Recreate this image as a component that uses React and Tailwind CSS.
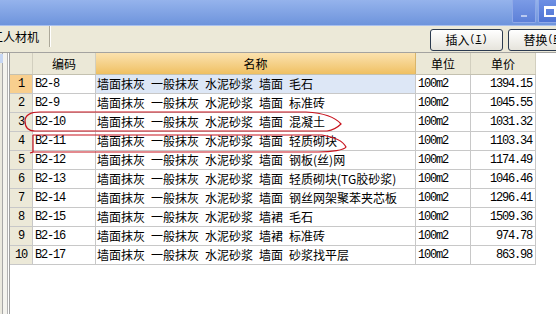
import React from "react";

const rows = [
  ["B2-8", ["墙面抹灰", "一般抹灰", "水泥砂浆", "墙面", "毛石"], "1394.15"],
  ["B2-9", ["墙面抹灰", "一般抹灰", "水泥砂浆", "墙面", "标准砖"], "1045.55"],
  ["B2-10", ["墙面抹灰", "一般抹灰", "水泥砂浆", "墙面", "混凝土"], "1031.32"],
  ["B2-11", ["墙面抹灰", "一般抹灰", "水泥砂浆", "墙面", "轻质砌块"], "1103.34"],
  ["B2-12", ["墙面抹灰", "一般抹灰", "水泥砂浆", "墙面", "钢板(丝)网"], "1174.49"],
  ["B2-13", ["墙面抹灰", "一般抹灰", "水泥砂浆", "墙面", "轻质砌块(TG胶砂浆)"], "1046.46"],
  ["B2-14", ["墙面抹灰", "一般抹灰", "水泥砂浆", "墙面", "钢丝网架聚苯夹芯板"], "1296.41"],
  ["B2-15", ["墙面抹灰", "一般抹灰", "水泥砂浆", "墙裙", "毛石"], "1509.36"],
  ["B2-16", ["墙面抹灰", "一般抹灰", "水泥砂浆", "墙裙", "标准砖"], "974.78"],
  ["B2-17", ["墙面抹灰", "一般抹灰", "水泥砂浆", "墙面", "砂浆找平层"], "863.98"],
];

const cjk = { fontFamily: '"Noto Sans CJK SC", "Liberation Sans", sans-serif' };
const mono = { fontFamily: '"Liberation Mono", "Noto Sans CJK SC", monospace' };

export default function App() {
  return (
    <div className="relative w-[556px] h-[315px] overflow-hidden bg-white text-black" style={cjk}>
      {/* Title bar */}
      <div className="h-[26px] flex justify-end items-start bg-gradient-to-b from-[#95b3ec] to-[#6e94dc] border-b border-[#a9c0ee]">
        <div className="flex gap-[2px] mr-[-6px]">
          <div className="w-[24px] h-[23px] rounded-b-[2px] bg-gradient-to-b from-[#7b9be6] to-[#5d80d8] border border-[#8fa9e8] border-t-0 flex items-end justify-center pb-[5px]">
            <div className="w-[6px] h-[2px] bg-[#b9c9f0]" />
          </div>
          <div className="w-[24px] h-[23px] rounded-b-[2px] bg-gradient-to-b from-[#6d8fe4] to-[#4f74d4] border border-[#8fa9e8] border-t-0 flex items-center justify-center">
            <div className="w-[12px] h-[11px] border-2 border-t-[3px] border-white" />
          </div>
        </div>
      </div>

      {/* Toolbar */}
      <div className="h-[27px] flex items-center bg-[#ece9d8] border-b border-[#a4a3a0] overflow-hidden">
        <div className="ml-[-9px] text-[12px] leading-[14px] mb-[4px]" style={cjk}>工人材机</div>
        <div className="ml-[10px] self-start h-[21px] w-[2px] border-l border-[#aca899] border-r border-r-white" />
        <div className="flex-1" />
        <div className="flex gap-[5px] mr-[-25px] mt-[1px]">
          <div className="w-[73px] h-[22px] rounded-[3px] border border-[#2b3a4f] bg-gradient-to-b from-white to-[#e6e4dc] flex items-center justify-center text-[12px] leading-[14px]">
            插入<span className="text-[10px]" style={mono}>(<span className="underline">I</span>)</span>
          </div>
          <div className="w-[73px] h-[22px] rounded-[3px] border border-[#2b3a4f] bg-gradient-to-b from-white to-[#e6e4dc] flex items-center justify-center text-[12px] leading-[14px]">
            替换<span className="text-[10px]" style={mono}>(<span className="underline">R</span>)</span>
          </div>
        </div>
      </div>

      {/* Body */}
      <div className="flex h-[261px]">
        {/* left strip */}
        <div className="w-[3px] bg-[#ebe9df] border-r border-[#a7a7a7] relative">
          <div className="absolute left-0 top-[1px] w-[3px] h-[9px] bg-[#c6d6f3]" />
        </div>
        <div className="w-[5px] bg-[#f4f3ee] border-r border-[#b3b3b3]" />
        <div className="w-[1px] bg-white" />

        {/* table */}
        <div className="flex flex-col border-l border-[#a0a0a0] h-full">
          <div className="grid grid-cols-[23px_63px_320px_55px_65px] h-[22px] border-b border-[#c4c1b0]">
            <div className="bg-[#ebe8d7] border-r border-[#d2cfbf]" />
            <div className="bg-[#ebe8d7] border-r border-[#d2cfbf] flex items-center justify-center text-[12px]">编码</div>
            <div className="bg-gradient-to-b from-[#fbe2ae] to-[#efc061] border-r border-[#d9b56a] flex items-center justify-center text-[12px]">名称</div>
            <div className="bg-[#ebe8d7] border-r border-[#d2cfbf] flex items-center justify-center text-[12px]">单位</div>
            <div className="bg-[#ebe8d7] border-r border-[#d2cfbf] flex items-center justify-center text-[12px]">单价</div>
          </div>
          {rows.map((r, i) => (
            <div key={i} className="grid grid-cols-[23px_63px_320px_55px_65px] h-[19px] border-b border-[#c8c8c8]">
              <div className={`${i === 0 ? "bg-[#f8cf8e]" : "bg-[#ece9d8]"} border-r border-[#c8c8c8] flex items-center justify-center text-[12px] tracking-[-1.2px]`} style={mono}>{i + 1}</div>
              <div className="border-r border-[#c8c8c8] flex items-center pl-[2px] text-[12px] tracking-[-1.2px]" style={mono}>{r[0]}</div>
              <div className={`${i === 0 ? "bg-[#dde7f6]" : ""} border-r border-[#c8c8c8] flex items-center gap-[6px] pl-[1px] text-[12px] leading-[14px] whitespace-nowrap`}>
                {r[1].map((w, j) => <span key={j}>{w}</span>)}
              </div>
              <div className="border-r border-[#c8c8c8] flex items-center pl-[2px] text-[12px] tracking-[-1.2px]" style={mono}>100m2</div>
              <div className="border-r border-[#c8c8c8] flex items-center justify-end pr-[3px] text-[12px] tracking-[-1.2px]" style={mono}>{r[2]}</div>
            </div>
          ))}
        </div>
      </div>

      {/* red annotations */}
      <svg className="absolute left-0 top-0 pointer-events-none" width="556" height="315" viewBox="0 0 556 315">
        <path d="M40 112 C31 112 25 115 25 121 C25 127 28 131 35 131 L327 131 C333 130 338 127 341 124 C336 118 324 113 306 112 L40 112" fill="none" stroke="#c8141e" strokeWidth="1.2" />
        <path d="M33 135 L33 152 L30 153 M33 152 L318 152 C332 152 344 150 346 147 C343 141 334 137 322 135 L33 135" fill="none" stroke="#c8141e" strokeWidth="1.2" />
      </svg>
    </div>
  );
}
